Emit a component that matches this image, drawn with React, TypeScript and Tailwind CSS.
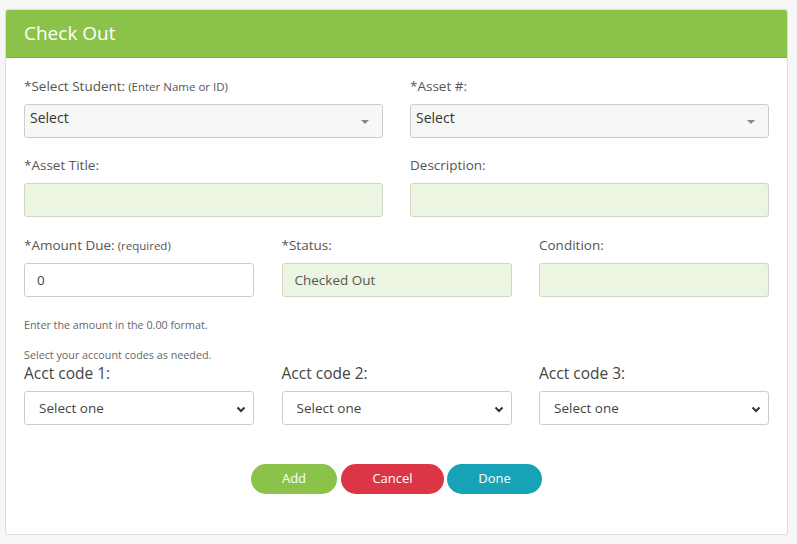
import React from "react";

const font = { fontFamily: '"Open Sans", "Noto Sans", sans-serif' };

function Caret() {
  return (
    <svg width="10" height="6" viewBox="0 0 10 6" className="absolute right-[12px] top-[14px]">
      <path d="M1 1 L9 1 L5 5 Z" fill="#888" />
    </svg>
  );
}

function Chevron() {
  return (
    <svg width="10" height="7" viewBox="0 0 10 7" className="absolute right-[7px] top-[14px]">
      <path d="M1.5 1.5 L5 5 L8.5 1.5" fill="none" stroke="#333" strokeWidth="2" />
    </svg>
  );
}

function Select2() {
  return (
    <div className="relative h-[34px] rounded-[3px] border border-[#ccc] bg-[#f7f7f7] pl-[5px] pt-[3px] leading-[20px] text-[14px] text-[#333]">
      Select
      <Caret />
    </div>
  );
}

function GreenBox({ text }: { text?: string }) {
  return (
    <div className="h-[34px] rounded-[3px] border border-[#cfd6c8] bg-[#ebf5e2] flex items-center pl-[12px] text-[13.5px] text-[#555]">
      {text}
    </div>
  );
}

function NativeSel() {
  return (
    <div className="relative h-[34px] rounded-[3px] border border-[#ccc] bg-white flex items-center pl-[14px] text-[13.5px] text-[#444]">
      Select one
      <Chevron />
    </div>
  );
}

function Label({ children, sub }: { children: React.ReactNode; sub?: string }) {
  return (
    <div className="h-[20px] leading-[20px] text-[13.5px] text-[#555] mb-[8px] whitespace-nowrap">
      {children}
      {sub && <span className="text-[11.5px]"> {sub}</span>}
    </div>
  );
}

export default function App() {
  return (
    <div style={font} className="w-[797px] h-[544px] bg-[#f6f6f6] pt-[9px] pl-[5px]">
      <div className="w-[783px] h-[526px] bg-white border border-[#dcdcdc] rounded-[3px] overflow-hidden">
        <div className="h-[48px] bg-[#8bc34a] px-[18px] flex items-center text-white text-[19px] border-b border-[#7fb443]">
          Check Out
        </div>
        <div className="px-[18px] pt-[18px]">
          <div className="grid grid-cols-2 gap-x-[27px]">
            <div>
              <Label sub="(Enter Name or ID)">*Select Student:</Label>
              <Select2 />
            </div>
            <div>
              <Label>*Asset #:</Label>
              <Select2 />
            </div>
          </div>
          <div className="grid grid-cols-2 gap-x-[27px] mt-[17px]">
            <div>
              <Label>*Asset Title:</Label>
              <GreenBox />
            </div>
            <div>
              <Label>Description:</Label>
              <GreenBox />
            </div>
          </div>
          <div className="grid grid-cols-[230px_230px_230px] justify-between mt-[18px]">
            <div>
              <Label sub="(required)">*Amount Due:</Label>
              <div className="h-[34px] rounded-[3px] border border-[#ccc] bg-white flex items-center pl-[12px] text-[13.5px] text-[#444]">
                0
              </div>
            </div>
            <div>
              <Label>*Status:</Label>
              <GreenBox text="Checked Out" />
            </div>
            <div>
              <Label>Condition:</Label>
              <GreenBox />
            </div>
          </div>
          <div className="mt-[21px] text-[10.75px] text-[#666] leading-[14px]">Enter the amount in the 0.00 format.</div>
          <div className="mt-[16px] text-[10.75px] text-[#666] leading-[14px]">Select your account codes as needed.</div>
          <div className="grid grid-cols-[230px_230px_230px] justify-between mt-[1px]">
            {[1, 2, 3].map((n) => (
              <div key={n}>
                <div className="h-[20px] leading-[20px] text-[15.5px] text-[#444] mb-[8px]">Acct code {n}:</div>
                <NativeSel />
              </div>
            ))}
          </div>
          <div className="flex justify-center mt-[39px]">
            <button className="w-[86px] h-[30px] rounded-full bg-[#8bc34a] text-white text-[13px]">Add</button>
            <button className="ml-[4px] w-[103px] h-[30px] rounded-full bg-[#dc3545] text-white text-[13px]">Cancel</button>
            <button className="ml-[3px] w-[95px] h-[30px] rounded-full bg-[#17a2b8] text-white text-[13px]">Done</button>
          </div>
        </div>
      </div>
    </div>
  );
}
